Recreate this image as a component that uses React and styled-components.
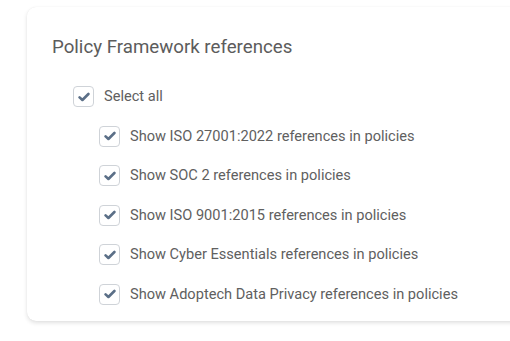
import React, { useState } from "react";
import styled, { createGlobalStyle } from "styled-components";

const GlobalStyle = createGlobalStyle`
  body {
    margin: 0;
    background: #fff;
    font-family: Roboto, "Liberation Sans", sans-serif;
  }
`;

const FRAMEWORKS = [
  "ISO 27001:2022",
  "SOC 2",
  "ISO 9001:2015",
  "Cyber Essentials",
  "Adoptech Data Privacy",
];

const Check = () => (
  <svg width="12" height="10" viewBox="0 0 12 10">
    <path
      d="M1.6 5.4 L4.4 8 L10.4 2"
      fill="none"
      stroke="#5b6f87"
      strokeWidth="2.6"
      strokeLinecap="round"
      strokeLinejoin="round"
    />
  </svg>
);

const Checkbox = ({ checked, onChange, label, nested }) => (
  <Row $nested={nested} onClick={onChange}>
    <Box>{checked && <Check />}</Box>
    <Label>{label}</Label>
  </Row>
);

const App = () => {
  const [checked, setChecked] = useState(FRAMEWORKS.map(() => true));
  const all = checked.every(Boolean);

  return (
    <>
      <GlobalStyle />
      <Page>
        <Card>
          <Title>Policy Framework references</Title>
          <List>
            <Checkbox
              label="Select all"
              checked={all}
              onChange={() => setChecked(FRAMEWORKS.map(() => !all))}
            />
            {FRAMEWORKS.map((name, i) => (
              <Checkbox
                key={name}
                nested
                label={`Show ${name} references in policies`}
                checked={checked[i]}
                onChange={() =>
                  setChecked(checked.map((c, j) => (j === i ? !c : c)))
                }
              />
            ))}
          </List>
        </Card>
      </Page>
    </>
  );
};

const Page = styled.div`
  width: 510px;
  height: 341px;
  overflow: hidden;
  padding: 7px 0 0 27px;
  box-sizing: border-box;
`;

const Card = styled.div`
  width: 520px;
  box-sizing: border-box;
  padding: 29px 0 16px 25px;
  background: #fff;
  border-radius: 9px;
  box-shadow: 0 2px 4px rgba(0, 0, 0, 0.12), 0 0 1px rgba(0, 0, 0, 0.08);
`;

const Title = styled.h2`
  margin: 0;
  font-size: 18.7px;
  font-weight: 400;
  line-height: 22px;
  color: #5c5c5c;
`;

const List = styled.div`
  display: flex;
  flex-direction: column;
  gap: 18.5px;
  margin-top: 28px;
  padding-left: 21px;
`;

const Row = styled.label`
  display: flex;
  align-items: center;
  gap: 10px;
  margin-left: ${(p) => (p.$nested ? "26px" : "0")};
  cursor: pointer;
`;

const Box = styled.span`
  display: flex;
  align-items: center;
  justify-content: center;
  width: 21px;
  height: 21px;
  box-sizing: border-box;
  border: 1px solid #cfd3d8;
  border-radius: 4px;
  background: #fff;
  flex-shrink: 0;
`;

const Label = styled.span`
  font-size: 14.6px;
  line-height: 21px;
  color: #606060;
`;

export default App;
